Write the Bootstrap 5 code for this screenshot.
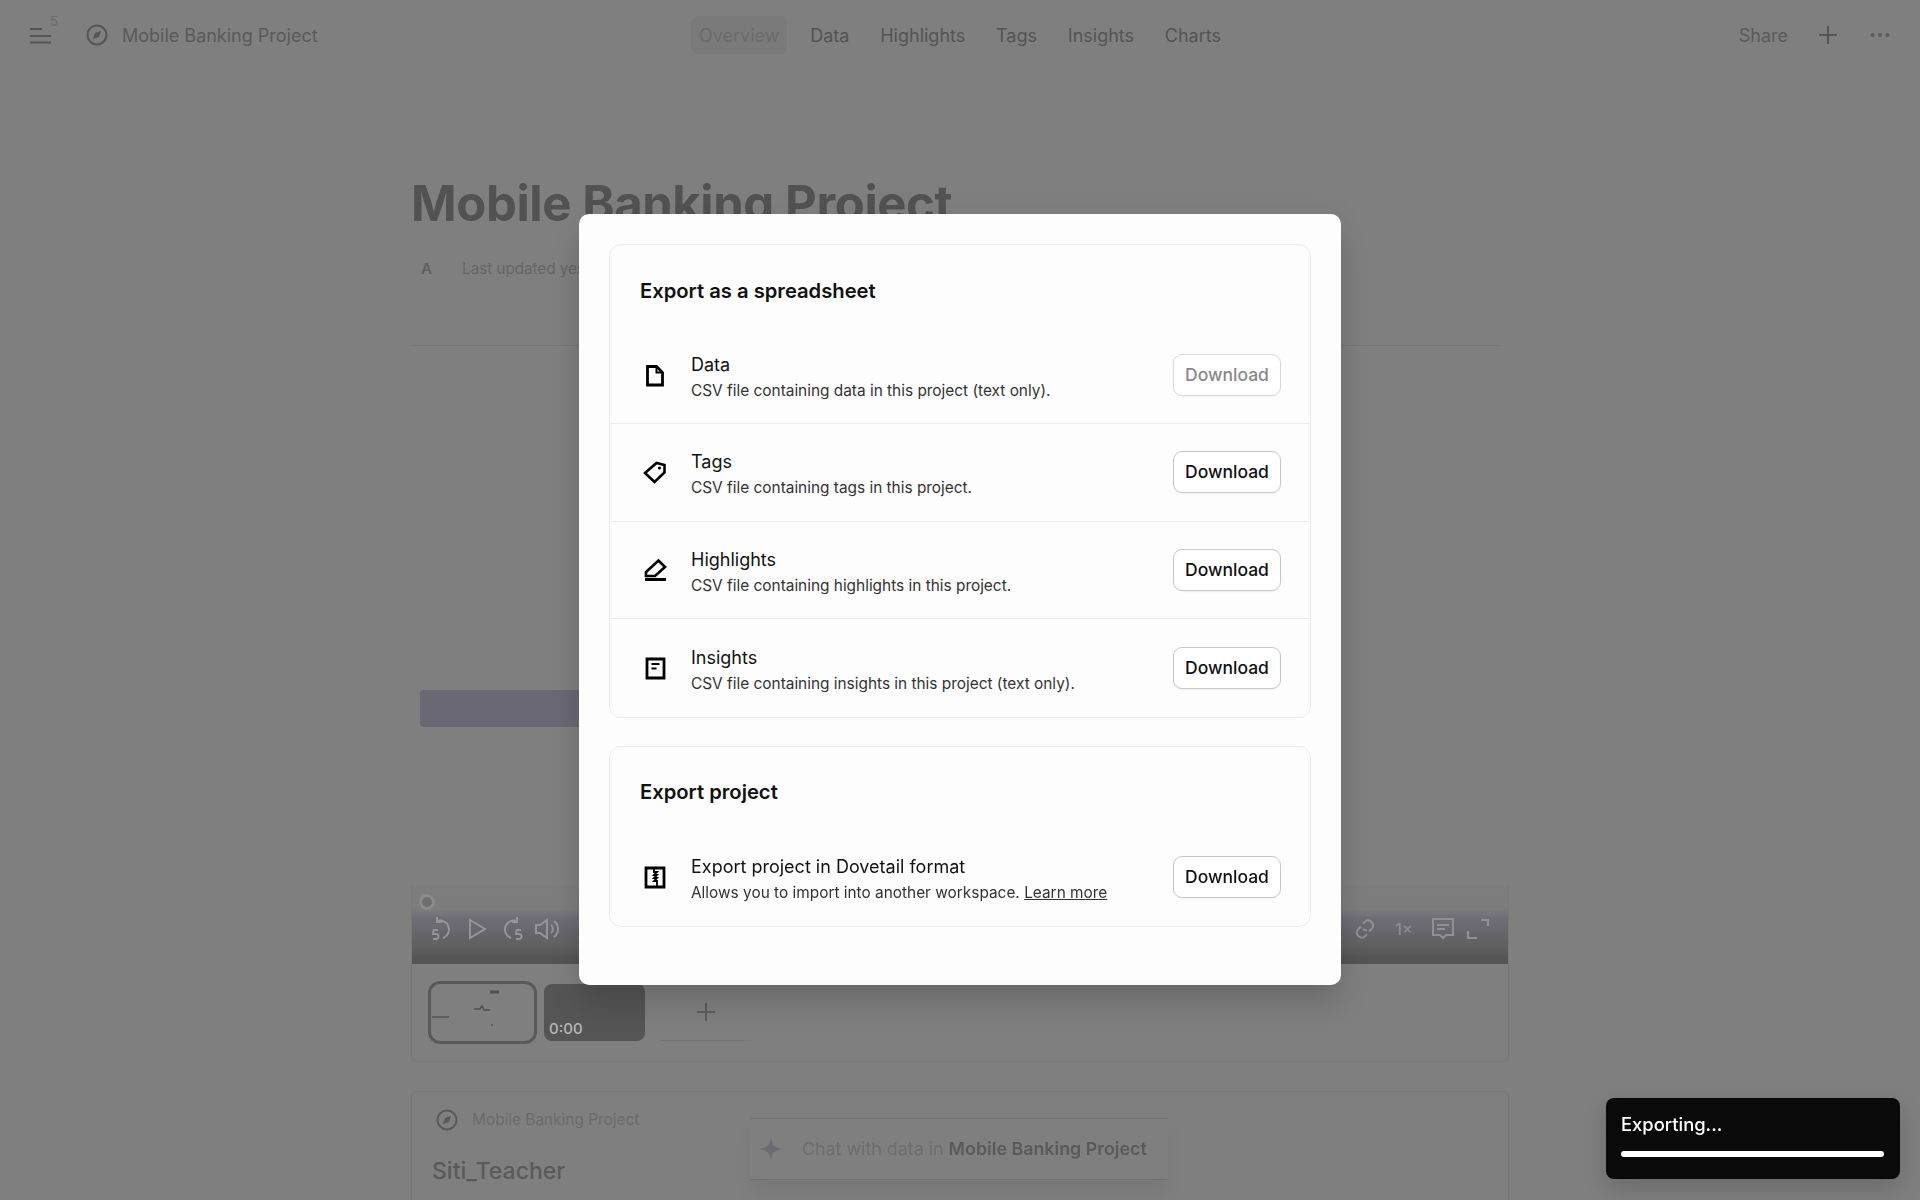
<!DOCTYPE html>
<html lang="en">
<head>
<meta charset="utf-8">
<title>Mobile Banking Project</title>
<link href="https://cdn.jsdelivr.net/npm/bootstrap@5.3.0/dist/css/bootstrap.min.css" rel="stylesheet">
<style>
html,body{height:1200px;overflow:hidden}
body{background:#807f7f;font-family:"Inter","Liberation Sans",sans-serif;color:#555}
.top-head{display:grid;grid-template-columns:1fr auto 1fr;height:70px;align-items:center;padding:0 30px}
.burger{width:21px;height:20px;margin-right:34px}
.burger-wrap{position:relative}
.burger-num{position:absolute;left:20px;top:-13px;font-size:13px;color:#6a6a6a}
.proj{font-size:18px;color:#5a5a5a;margin-left:13px}
.tab-pill{font-size:18px;color:#545454;padding:9px 8px 7px;margin:0 7.4px;border-radius:8px;line-height:22px}
.tab-pill.on{background:#7a7a7a;color:#6c6c6c}
.share-txt{font-size:18px;color:#5a5a5a;margin-right:30px}
.plus-gap{margin-right:28px}
.page-wrap{width:1098px;margin:0 auto}
.big-title{font-size:49px;font-weight:700;color:#525252;line-height:60px;margin:104px 0 0;letter-spacing:-.4px}
.meta-row{font-size:15.2px;color:#666;height:30px;margin-top:20px;padding-left:10px;gap:30px}
.meta-a{font-weight:600;color:#606060}
.rule-line{height:1px;background:#777;width:1089px;margin-top:61px}
.video-zone{height:618px}
.purple-bar{height:37px;width:900px;margin:344px 0 0 9px;background:#6a6872;border-radius:4px}
.ctrl-bar{height:78px;margin-top:auto;background:linear-gradient(#7d7d7d 0,#7c7c7e 30%,#6f6e78 41%,#67676c 58%,#606060 78%,#555 92%,#555 100%);padding:8px 17px 0 8px;border-left:1px solid #787878;border-right:1px solid #787878}
.scrub{width:16px;height:16px;border-radius:50%;background:#6e6e6e;border:3px solid #8a8a8a;margin-left:-1px}
.ctl-row{margin-top:6px;margin-left:9px}
.ctl-group{gap:9px}
.one-x{font-size:16px;color:#8b8b8f;width:26px;text-align:center;font-weight:500}
.thumbs{height:98px;border:1px solid #787878;border-top:0;padding-left:16px;gap:7px;border-radius:0 0 6px 6px}
.thumb-a{width:109px;height:63px;border:3px solid #5a5a5a;border-radius:12px}
.thumb-b{width:101px;height:57px;background:#555;border-radius:8px;color:#b5b5b5;font-size:15px;font-weight:500;padding:0 0 1px 5px}
.thumb-add{width:90px;height:57px;margin-left:9px;border-bottom:1px solid #757575}
.lower-card{margin-top:29px;height:110px;border:1px solid #787878;border-bottom:0;border-radius:6px 6px 0 0;padding:16px 20px}
.lower-mark{margin-left:3px}
.lower-small{font-size:15.4px;color:#6b6b6b;margin-left:13px}
.lower-name{font-size:23px;font-weight:500;color:#5a5a5a;margin-top:24px;line-height:30px}
.chat-float{width:418px;height:62px;bottom:20px;margin-left:-1px;border-top:1px solid #757575;border-bottom:1px solid #727272;box-shadow:0 14px 18px rgba(0,0,0,.05);padding-left:8px;gap:18px;font-size:17.85px;color:#6e6e6e}
.chat-float b{color:#5a5a5a;font-weight:600}
.export-dialog{max-width:762px;width:762px;margin:214px auto 0}
.export-box{background:#fdfdfd;border:0;border-radius:10px;padding:30px;gap:28px;box-shadow:0 20px 30px rgba(0,0,0,.14),0 0 30px rgba(0,0,0,.05);height:771px}
.sec-card{border:1px solid #ececec;border-radius:12px;background:#fdfdfd}
.sec-card>.list-group{border-top:0}
.sec-title{font-size:20.2px;font-weight:600;color:#111;padding:10px 30px 0;height:81.5px;display:flex;align-items:center;margin:0}
.exp-row{background:transparent;height:97.5px;padding:0 29px 0 33px;gap:24px;border-color:#ececec;display:flex;align-items:center}
.exp-text{padding-top:7px}
.exp-name{font-size:18px;color:#111;line-height:24px}
.exp-desc{font-size:15.4px;color:#333;line-height:27px}
.exp-desc a{color:#333}
.dl-btn{width:108px;height:42px;padding:0;font-size:17.5px;font-weight:500;background:#fff;border:1px solid #c8c8c8;border-radius:9px;color:#111;box-shadow:0 1px 2px rgba(0,0,0,.05)}
.dl-btn:disabled{background:#fff;border-color:#dadada;color:#888;opacity:1}
.export-toast{width:294px;height:81px;right:20px;bottom:21px;background:#0a0a0a;border-radius:8px;padding:15px 15px;color:#fff;box-shadow:0 10px 24px rgba(0,0,0,.16);z-index:1060}
.toast-txt{font-size:18.4px;font-weight:500;line-height:22px}
.toast-track{height:6px;width:263px;margin-top:16px;background:#fff;border-radius:3px}
</style>
</head>
<body>
<header class="top-head">
  <div class="d-flex align-items-center">
    <div class="burger-wrap">
      <svg class="burger d-block" viewBox="0 0 21 20" fill="none" stroke="#555" stroke-width="2"><path d="M0 4h12M0 11h21M0 17.500h21"/></svg>
      <span class="burger-num">5</span>
    </div>
    <svg width="24" height="24" viewBox="0 0 24 24" fill="none"><circle cx="12" cy="12" r="9.500" stroke="#555" stroke-width="2"/><path d="M16 8l-2 6-6 2 2-6z" fill="#555"/></svg>
    <span class="proj">Mobile Banking Project</span>
  </div>
  <nav class="d-flex align-items-center">
    <span class="tab-pill on">Overview</span>
    <span class="tab-pill">Data</span>
    <span class="tab-pill">Highlights</span>
    <span class="tab-pill">Tags</span>
    <span class="tab-pill">Insights</span>
    <span class="tab-pill">Charts</span>
  </nav>
  <div class="d-flex align-items-center justify-content-end">
    <span class="share-txt">Share</span>
    <svg class="plus-gap" width="20" height="20" viewBox="0 0 20 20" stroke="#555" stroke-width="2"><path d="M10 1v18M1 10h18"/></svg>
    <svg class="ms-1" width="20" height="6" viewBox="0 0 20 6" fill="#5c5c5c"><circle cx="2.500" cy="3" r="2"/><circle cx="10" cy="3" r="2"/><circle cx="17.500" cy="3" r="2"/></svg>
  </div>
</header>

<main class="page-wrap">
  <h1 class="big-title">Mobile Banking Project</h1>
  <div class="meta-row d-flex align-items-center"><span class="meta-a">A</span><span>Last updated yesterday</span></div>
  <div class="rule-line"></div>
  <div class="video-zone d-flex flex-column">
    <div class="purple-bar"></div>
    <div class="ctrl-bar">
      <div class="scrub"></div>
      <div class="ctl-row d-flex justify-content-between">
        <div class="d-flex ctl-group">
          <svg width="26" height="26" viewBox="0 0 26 26" fill="none" stroke="#94949a" stroke-width="2"><path d="M8 5a9 9 0 1 1 6 17M8 1v5h5"/><path d="M9 14H4.500L4 18h3a2.500 2.500 0 0 1 0 5H4" stroke-width="1.800"/></svg>
          <svg width="26" height="26" viewBox="0 0 26 26" fill="none" stroke="#94949a" stroke-width="2"><path d="M6 4l15 9-15 9z"/></svg>
          <svg width="26" height="26" viewBox="0 0 26 26" fill="none" stroke="#94949a" stroke-width="2"><path d="M18 5a9 9 0 1 0-6 17M18 1v5h-5"/><path d="M22 14h-4.500L17 18h3a2.500 2.500 0 0 1 0 5h-3" stroke-width="1.800"/></svg>
          <svg width="26" height="26" viewBox="0 0 26 26" fill="none" stroke="#94949a" stroke-width="2"><path d="M2 9v8h4l7 5V4L6 9zM17 9a5 5 0 0 1 0 8M20 5a10 10 0 0 1 0 16"/></svg>
        </div>
        <div class="d-flex ctl-group align-items-center">
          <svg width="26" height="26" viewBox="0 0 26 26" fill="none" stroke="#8f8f94" stroke-width="2"><path d="M11 8l2-2.500a5 5 0 0 1 7 7l-3 3M15 18l-2 2.500a5 5 0 0 1-7-7l3-3M11 13a4 4 0 0 0 4 1"/></svg>
          <span class="one-x mx-1">1×</span>
          <svg width="26" height="26" viewBox="0 0 26 26" fill="none" stroke="#8f8f94" stroke-width="2"><path d="M3 3h20v16h-7l-3 3-3-3H3zM7 9h12M7 13h8" /></svg>
          <svg width="26" height="26" viewBox="0 0 26 26" fill="none" stroke="#8f8f94" stroke-width="2.200"><path d="M16 4h7v6M3 15v7h9"/></svg>
        </div>
      </div>
    </div>
  </div>
  <div class="thumbs d-flex align-items-center">
    <div class="thumb-a">
      <svg class="d-block" width="103" height="57" viewBox="0 0 103 57" fill="none" stroke="#505050"><path d="M59 8h9" stroke-width="3"/><path d="M43 25h6l2-3 2 4h6" stroke-width="1.500"/><path d="M1 33h17" stroke-width="1.500"/><path d="M61 40v2" stroke-width="1.500"/></svg>
    </div>
    <div class="thumb-b d-flex align-items-end">0:00</div>
    <div class="thumb-add d-flex align-items-center justify-content-center">
      <svg width="20" height="20" viewBox="0 0 20 20" stroke="#5c5c5c" stroke-width="2"><path d="M10 1v18M1 10h18"/></svg>
    </div>
  </div>
  <section class="lower-card">
    <div class="d-flex align-items-center">
      <svg class="lower-mark" width="24" height="24" viewBox="0 0 24 24" fill="none"><circle cx="12" cy="12" r="9.500" stroke="#5a5a5a" stroke-width="2"/><path d="M16 8l-2 6-6 2 2-6z" fill="#5a5a5a"/></svg>
      <span class="lower-small">Mobile Banking Project</span>
    </div>
    <div class="lower-name">Siti_Teacher</div>
  </section>
</main>

<div class="chat-float position-fixed start-50 translate-middle-x d-flex align-items-center">
  <svg width="26" height="26" viewBox="0 0 26 26" fill="#6b6b76"><path d="M13 1c1 8 3 11 12 12-9 1-11 4-12 12-1-8-3-11-12-12 9-1 11-4 12-12z"/></svg>
  <span>Chat with data in <b>Mobile Banking Project</b></span>
</div>

<div class="modal d-block" role="dialog" aria-modal="true">
  <div class="modal-dialog export-dialog">
    <div class="modal-content export-box">
      <div class="card sec-card">
        <h2 class="sec-title">Export as a spreadsheet</h2>
        <div class="list-group list-group-flush">
          <div class="list-group-item exp-row">
            <svg width="24" height="24" viewBox="0 0 24 24" fill="none" stroke="#000" stroke-width="2.800"><path d="M4.500 3.500h9l6 6V22h-15z"/><path d="M13.500 3.500v6h6" stroke-width="2"/></svg>
            <div class="flex-grow-1 exp-text"><div class="exp-name">Data</div><div class="exp-desc">CSV file containing data in this project (text only).</div></div>
            <button class="btn dl-btn" disabled>Download</button>
          </div>
          <div class="list-group-item exp-row">
            <svg width="24" height="24" viewBox="0 0 24 24" fill="none" stroke="#000" stroke-width="2.600"><path d="M2 13L13.500 3 21.500 5V12.500L11.500 22z"/><circle cx="16.500" cy="8" r=".8" fill="#000" stroke-width="1.500"/></svg>
            <div class="flex-grow-1 exp-text"><div class="exp-name">Tags</div><div class="exp-desc">CSV file containing tags in this project.</div></div>
            <button class="btn dl-btn">Download</button>
          </div>
          <div class="list-group-item exp-row">
            <svg width="24" height="24" viewBox="0 0 24 24" fill="none" stroke="#000" stroke-width="2.700"><path d="M3 18v-4L15.500 2.500 22 9 12 18z"/><path d="M2 21.500h21" stroke-width="3"/></svg>
            <div class="flex-grow-1 exp-text"><div class="exp-name">Highlights</div><div class="exp-desc">CSV file containing highlights in this project.</div></div>
            <button class="btn dl-btn">Download</button>
          </div>
          <div class="list-group-item exp-row">
            <svg width="24" height="24" viewBox="0 0 24 24" fill="none" stroke="#000" stroke-width="2.800"><path d="M4 3h17v19H4z"/><path d="M8.500 8h8M8.500 12.500h5" stroke-width="2"/></svg>
            <div class="flex-grow-1 exp-text"><div class="exp-name">Insights</div><div class="exp-desc">CSV file containing insights in this project (text only).</div></div>
            <button class="btn dl-btn">Download</button>
          </div>
        </div>
      </div>
      <div class="card sec-card">
        <h2 class="sec-title">Export project</h2>
        <div class="list-group list-group-flush">
          <div class="list-group-item exp-row">
            <svg width="24" height="24" viewBox="0 0 24 24" fill="none" stroke="#000" stroke-width="2.800"><path d="M3 3h18v19H3z"/><path d="M11 3v4h3l-3 3h3l-3 3h3l-3 3h3v6" stroke-width="1.800"/></svg>
            <div class="flex-grow-1 exp-text"><div class="exp-name">Export project in Dovetail format</div><div class="exp-desc">Allows you to import into another workspace. <a href="#">Learn more</a></div></div>
            <button class="btn dl-btn">Download</button>
          </div>
        </div>
      </div>
    </div>
  </div>
</div>

<div class="export-toast position-fixed">
  <div class="toast-txt">Exporting...</div>
  <div class="toast-track"></div>
</div>
<script src="https://cdn.jsdelivr.net/npm/bootstrap@5.3.0/dist/js/bootstrap.bundle.min.js"></script>
</body>
</html>
